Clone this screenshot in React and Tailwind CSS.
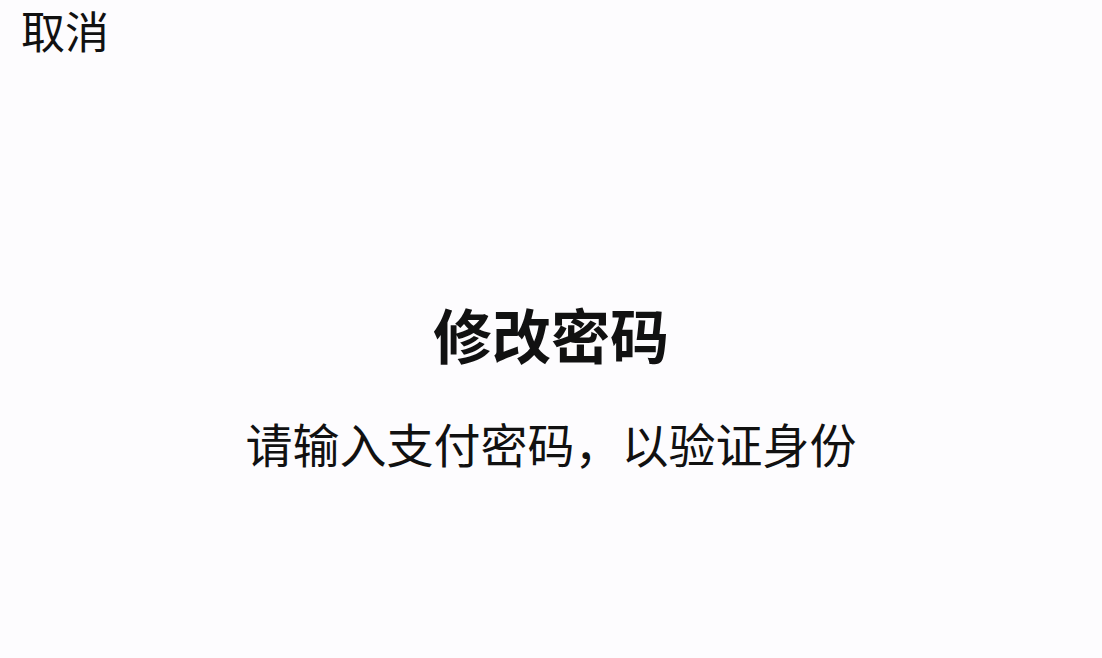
import React from 'react';

const App = () => {
  return (
    <div
      className="w-full h-[658px] bg-[#fdfcfe] text-[#111111] overflow-hidden"
      style={{ fontFamily: '"Noto Sans CJK SC", "Noto Sans", sans-serif' }}
    >
      <div className="px-[21px]">
        <button className="text-[44px] leading-[60px] font-normal">取消</button>
      </div>

      <div className="flex flex-col items-center pt-[239px]">
        <h1 className="text-[59px] leading-[70px] font-bold">修改密码</h1>
        <p className="mt-[44px] text-[47px] leading-[60px] font-normal">请输入支付密码，以验证身份</p>
      </div>
    </div>
  );
};

export default App;
